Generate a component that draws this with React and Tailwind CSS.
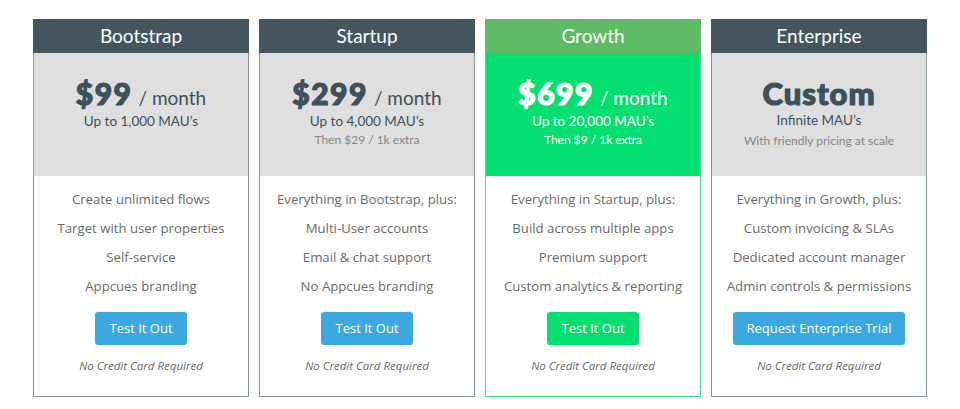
import React from 'react';

const plans = [
  {
    name: 'Bootstrap',
    price: '$99',
    mau: 'Up to 1,000 MAU\u2019s',
    extra: null,
    features: ['Create unlimited flows', 'Target with user properties', 'Self-service', 'Appcues branding'],
    cta: 'Test It Out',
  },
  {
    name: 'Startup',
    price: '$299',
    mau: 'Up to 4,000 MAU\u2019s',
    extra: 'Then $29 / 1k extra',
    features: ['Everything in Bootstrap, plus:', 'Multi-User accounts', 'Email & chat support', 'No Appcues branding'],
    cta: 'Test It Out',
  },
  {
    name: 'Growth',
    price: '$699',
    mau: 'Up to 20,000 MAU\u2019s',
    extra: 'Then $9 / 1k extra',
    features: ['Everything in Startup, plus:', 'Build across multiple apps', 'Premium support', 'Custom analytics & reporting'],
    cta: 'Test It Out',
    featured: true,
  },
  {
    name: 'Enterprise',
    custom: 'Custom',
    mau: 'Infinite MAU\u2019s',
    extra: 'With friendly pricing at scale',
    features: ['Everything in Growth, plus:', 'Custom invoicing & SLAs', 'Dedicated account manager', 'Admin controls & permissions'],
    cta: 'Request Enterprise Trial',
  },
];

const PlanCard = ({ plan }) => {
  const featured = plan.featured;
  return (
    <div
      className={
        featured
          ? 'w-[216px] flex flex-col border border-[#3ee58e] bg-white'
          : 'w-[216px] flex flex-col border border-[#86939b] bg-white'
      }
    >
      {/* header */}
      <div
        className={
          featured
            ? 'h-[34px] -mx-px -mt-px flex items-center justify-center bg-[#5dbb63] text-white text-[19px] font-["Lato",sans-serif]'
            : 'h-[34px] -mx-px -mt-px flex items-center justify-center bg-[#44555e] text-white text-[19px] font-["Lato",sans-serif]'
        }
      >
        {plan.name}
      </div>

      {/* price */}
      <div
        className={
          featured
            ? 'h-[123px] pt-[22px] flex flex-col items-center bg-[#05df6f] text-white font-["Lato",sans-serif]'
            : 'h-[123px] pt-[22px] flex flex-col items-center bg-[#dfdfdf] text-[#3e515b] font-["Lato",sans-serif]'
        }
      >
        {plan.custom ? (
          <div className="mt-[3px] h-[30px] leading-[30px] text-[31px] font-black tracking-[1px] [-webkit-text-stroke:1.2px_currentColor]">
            {plan.custom}
          </div>
        ) : (
          <div className="h-[36px] leading-[36px] flex items-baseline">
            <span className="text-[30px] font-black tracking-[1.5px] [-webkit-text-stroke:1.2px_currentColor]">{plan.price}</span>
            <span className="text-[19px] ml-[6px]">/ month</span>
          </div>
        )}
        <div className={plan.custom ? 'mt-[2px] leading-5 text-[13.5px]' : 'leading-5 text-[13.5px]'}>{plan.mau}</div>
        {plan.extra && (
          <div
            className={
              featured
                ? 'leading-[18px] text-[12px] text-white'
                : plan.custom
                ? 'mt-[2px] leading-[18px] text-[12px] text-[#858585]'
                : 'leading-[18px] text-[12px] text-[#858585]'
            }
          >
            {plan.extra}
          </div>
        )}
      </div>

      {/* features */}
      <div className="flex flex-col items-center pt-[9px] pb-[21px] font-['Open_Sans',sans-serif] text-[#6a6a6a]">
        {plan.features.map((f) => (
          <div key={f} className="leading-[29px] text-[13.2px]">
            {f}
          </div>
        ))}
        <button
          className={
            featured
              ? 'mt-[11px] h-[33px] px-[14px] rounded-[3px] bg-[#05df6f] text-white text-[13px]'
              : 'mt-[11px] h-[33px] px-[14px] rounded-[3px] bg-[#3aa8e1] text-white text-[13px]'
          }
        >
          {plan.cta}
        </button>
        <div className="mt-3 leading-[18px] text-[11.5px] italic">No Credit Card Required</div>
      </div>
    </div>
  );
};

const App = () => {
  return (
    <div className="w-[960px] h-[409px] bg-white pt-[19px] flex items-start justify-center gap-[10px]">
      {plans.map((p) => (
        <PlanCard key={p.name} plan={p} />
      ))}
    </div>
  );
};

export default App;
